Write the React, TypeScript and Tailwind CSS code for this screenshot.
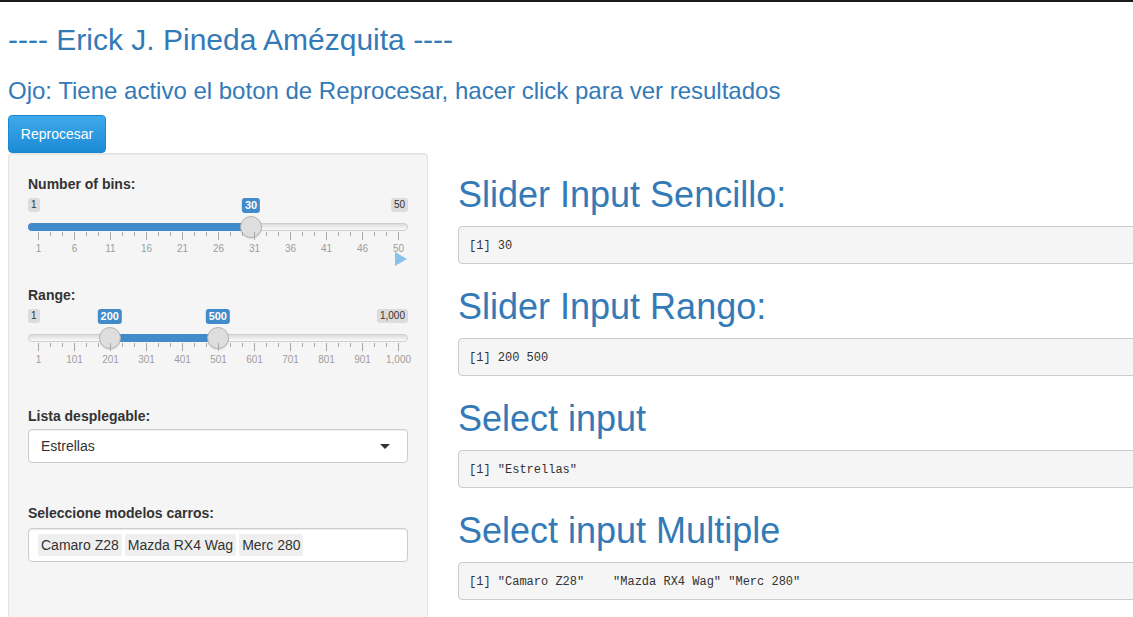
import React from 'react';

type SliderProps = {
  min: number;
  max: number;
  values: number[];
  grid: string[];
  maxLabel: string;
  showPlay?: boolean;
};

// track usable span inside the 380px slider box
const LEFT = 10;
const SPAN = 360;

function RangeSlider({ min, max, values, grid, maxLabel, showPlay }: SliderProps) {
  const pos = (v: number) => LEFT + ((v - min) / (max - min)) * SPAN;
  const isRange = values.length === 2;
  const barLeft = isRange ? pos(values[0]) : 0;
  const barRight = isRange ? pos(values[1]) : pos(values[0]);

  const ticks: { x: number; big: boolean }[] = [];
  for (let k = 0; k <= 10; k++) {
    ticks.push({ x: LEFT + k * 36, big: true });
    if (k < 10) {
      ticks.push({ x: LEFT + k * 36 + 12, big: false });
      ticks.push({ x: LEFT + k * 36 + 24, big: false });
    }
  }

  return (
    <div className="relative w-[380px] h-full">
      {/* min / max */}
      <span className="absolute left-0 top-0 px-[3px] py-[1px] text-[10px] leading-[12px] rounded-[3px] bg-black/10 text-[#333]">
        {min}
      </span>
      <span className="absolute right-0 top-0 px-[3px] py-[1px] text-[10px] leading-[12px] rounded-[3px] bg-black/10 text-[#333]">
        {maxLabel}
      </span>

      {/* line */}
      <div className="absolute left-0 right-0 top-[25px] h-[8px] rounded-full border border-[#cfcfcf] bg-gradient-to-b from-[#dcdcdc] to-[#fbfbfb]" />

      {/* bar */}
      <div
        className={`absolute top-[25px] h-[8px] bg-[#428bca] ${isRange ? '' : 'rounded-l-full'}`}
        style={{ left: barLeft, width: barRight - barLeft }}
      />

      {/* value labels + handles */}
      {values.map((v) => (
        <React.Fragment key={v}>
          <span
            className="absolute top-0 -translate-x-1/2 px-[3px] py-[1px] text-[11px] leading-[13px] font-bold rounded-[3px] bg-[#428bca] text-white"
            style={{ left: pos(v) }}
          >
            {v}
          </span>
          <div
            className="absolute top-[18px] w-[22px] h-[22px] rounded-full bg-[#dedede] border border-[#b3b3b3] shadow-[0_1px_1px_rgba(0,0,0,0.1)]"
            style={{ left: pos(v) - 11 }}
          />
        </React.Fragment>
      ))}

      {/* grid */}
      {ticks.map((t, i) => (
        <div
          key={i}
          className={`absolute top-[34px] w-px bg-[#a9a9a9] ${t.big ? 'h-[8px]' : 'h-[4px]'}`}
          style={{ left: t.x }}
        />
      ))}
      {grid.map((g, i) => (
        <span
          key={g}
          className="absolute top-[46px] -translate-x-1/2 text-[10px] leading-[10px] text-[#9d9d9d] whitespace-nowrap"
          style={{ left: LEFT + i * 36 + 0.5 }}
        >
          {g}
        </span>
      ))}

      {showPlay && (
        <svg className="absolute left-[367px] top-[54px]" width="12" height="14" viewBox="0 0 12 14">
          <path d="M0 0 L12 7 L0 14 Z" fill="#86c3eb" />
        </svg>
      )}
    </div>
  );
}

function OutputBlock({ title, text, first }: { title: string; text: string; first?: boolean }) {
  return (
    <div>
      <h1 className={`${first ? 'mt-[21px]' : 'mt-[22px]'} text-[36px] leading-[42px] text-[#337ab7]`}>{title}</h1>
      <pre className="mt-[10px] h-[38px] px-[10px] pt-[10px] pb-[8px] text-[12px] leading-[18px] text-[#333] bg-[#f5f5f5] border border-[#ccc] rounded-[4px] font-['Liberation_Mono',monospace] whitespace-pre">
        {text}
      </pre>
    </div>
  );
}

export default function App() {
  return (
    <div className="h-[617px] overflow-hidden bg-white border-t-2 border-[#1c1c1c] font-['Liberation_Sans',Arial,sans-serif] text-[#333]">
      <div className="px-2">
        <h2 className="mt-[21px] text-[30px] leading-[33px] text-[#337ab7] whitespace-nowrap">
          ---- Erick J. Pineda Amézquita ----
        </h2>
        <h3 className="mt-[22px] text-[24px] leading-[26px] text-[#337ab7] whitespace-nowrap">
          Ojo: Tiene activo el boton de Reprocesar, hacer click para ver resultados
        </h3>
        <button className="mt-[11px] h-[38px] w-[98px] rounded-[4px] border border-[#1d88d1] bg-gradient-to-b from-[#3eaaea] to-[#1b8ad6] text-white text-[14px]">
          Reprocesar
        </button>

        <div className="flex gap-[30px] w-[1320px]">
          {/* Sidebar */}
          <aside className="w-[420px] shrink-0 h-[480px] bg-[#f5f5f5] border border-[#e3e3e3] rounded-[4px] shadow-[inset_0_1px_1px_rgba(0,0,0,0.05)] px-[19px] pt-[20px]">
            <label className="block text-[14px] leading-[20px] font-bold">Number of bins:</label>
            <div className="mt-[4px] h-[72px]">
              <RangeSlider
                min={1}
                max={50}
                values={[30]}
                maxLabel="50"
                showPlay
                grid={['1', '6', '11', '16', '21', '26', '31', '36', '41', '46', '50']}
              />
            </div>

            <label className="mt-[15px] block text-[14px] leading-[20px] font-bold">Range:</label>
            <div className="mt-[4px] h-[60px]">
              <RangeSlider
                min={1}
                max={1000}
                values={[200, 500]}
                maxLabel="1,000"
                grid={['1', '101', '201', '301', '401', '501', '601', '701', '801', '901', '1,000']}
              />
            </div>

            <label className="mt-[37px] block text-[14px] leading-[20px] font-bold">Lista desplegable:</label>
            <div className="mt-[3px] h-[34px] flex items-center justify-between pl-[12px] pr-[17px] bg-white border border-[#ccc] rounded-[4px] shadow-[inset_0_1px_1px_rgba(0,0,0,0.08)] text-[14px]">
              <span>Estrellas</span>
              <span className="w-0 h-0 border-x-[5px] border-t-[5px] border-x-transparent border-t-[#333]" />
            </div>

            <label className="mt-[40px] block text-[14px] leading-[20px] font-bold">Seleccione modelos carros:</label>
            <div className="mt-[5px] h-[34px] flex items-center gap-[3px] pl-[9px] bg-white border border-[#ccc] rounded-[4px] shadow-[inset_0_1px_1px_rgba(0,0,0,0.08)] text-[14px]">
              {['Camaro Z28', 'Mazda RX4 Wag', 'Merc 280'].map((c) => (
                <span key={c} className="h-[22px] leading-[22px] px-[3px] bg-[#efefef] rounded-[2px]">
                  {c}
                </span>
              ))}
            </div>
          </aside>

          {/* Main */}
          <main className="w-[870px] shrink-0">
            <OutputBlock first title="Slider Input Sencillo:" text="[1] 30" />
            <OutputBlock title="Slider Input Rango:" text="[1] 200 500" />
            <OutputBlock title="Select input" text={'[1] "Estrellas"'} />
            <OutputBlock title="Select input Multiple" text={'[1] "Camaro Z28"    "Mazda RX4 Wag" "Merc 280"'} />
          </main>
        </div>
      </div>
    </div>
  );
}
